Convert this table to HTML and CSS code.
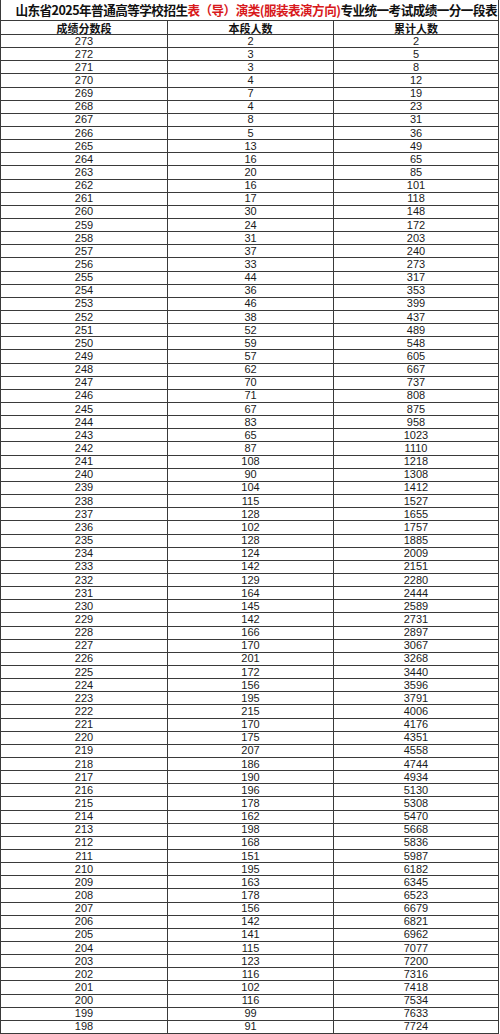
FILE: index.html
```html
<!DOCTYPE html>
<html lang="zh">
<head>
<meta charset="utf-8">
<link rel="stylesheet" href="styles.css">
</head>
<body>
<div class="sheet">
<div class="title">山东省2025年普通高等学校招生<span class="red">表（导）演类(服装表演方向)</span>专业统一考试成绩一分一段表</div>
<div class="hd">成绩分数段</div><div class="hd">本段人数</div><div class="hd">累计人数</div>
<div>273</div><div>2</div><div>2</div>
<div>272</div><div>3</div><div>5</div>
<div>271</div><div>3</div><div>8</div>
<div>270</div><div>4</div><div>12</div>
<div>269</div><div>7</div><div>19</div>
<div>268</div><div>4</div><div>23</div>
<div>267</div><div>8</div><div>31</div>
<div>266</div><div>5</div><div>36</div>
<div>265</div><div>13</div><div>49</div>
<div>264</div><div>16</div><div>65</div>
<div>263</div><div>20</div><div>85</div>
<div>262</div><div>16</div><div>101</div>
<div>261</div><div>17</div><div>118</div>
<div>260</div><div>30</div><div>148</div>
<div>259</div><div>24</div><div>172</div>
<div>258</div><div>31</div><div>203</div>
<div>257</div><div>37</div><div>240</div>
<div>256</div><div>33</div><div>273</div>
<div>255</div><div>44</div><div>317</div>
<div>254</div><div>36</div><div>353</div>
<div>253</div><div>46</div><div>399</div>
<div>252</div><div>38</div><div>437</div>
<div>251</div><div>52</div><div>489</div>
<div>250</div><div>59</div><div>548</div>
<div>249</div><div>57</div><div>605</div>
<div>248</div><div>62</div><div>667</div>
<div>247</div><div>70</div><div>737</div>
<div>246</div><div>71</div><div>808</div>
<div>245</div><div>67</div><div>875</div>
<div>244</div><div>83</div><div>958</div>
<div>243</div><div>65</div><div>1023</div>
<div>242</div><div>87</div><div>1110</div>
<div>241</div><div>108</div><div>1218</div>
<div>240</div><div>90</div><div>1308</div>
<div>239</div><div>104</div><div>1412</div>
<div>238</div><div>115</div><div>1527</div>
<div>237</div><div>128</div><div>1655</div>
<div>236</div><div>102</div><div>1757</div>
<div>235</div><div>128</div><div>1885</div>
<div>234</div><div>124</div><div>2009</div>
<div>233</div><div>142</div><div>2151</div>
<div>232</div><div>129</div><div>2280</div>
<div>231</div><div>164</div><div>2444</div>
<div>230</div><div>145</div><div>2589</div>
<div>229</div><div>142</div><div>2731</div>
<div>228</div><div>166</div><div>2897</div>
<div>227</div><div>170</div><div>3067</div>
<div>226</div><div>201</div><div>3268</div>
<div>225</div><div>172</div><div>3440</div>
<div>224</div><div>156</div><div>3596</div>
<div>223</div><div>195</div><div>3791</div>
<div>222</div><div>215</div><div>4006</div>
<div>221</div><div>170</div><div>4176</div>
<div>220</div><div>175</div><div>4351</div>
<div>219</div><div>207</div><div>4558</div>
<div>218</div><div>186</div><div>4744</div>
<div>217</div><div>190</div><div>4934</div>
<div>216</div><div>196</div><div>5130</div>
<div>215</div><div>178</div><div>5308</div>
<div>214</div><div>162</div><div>5470</div>
<div>213</div><div>198</div><div>5668</div>
<div>212</div><div>168</div><div>5836</div>
<div>211</div><div>151</div><div>5987</div>
<div>210</div><div>195</div><div>6182</div>
<div>209</div><div>163</div><div>6345</div>
<div>208</div><div>178</div><div>6523</div>
<div>207</div><div>156</div><div>6679</div>
<div>206</div><div>142</div><div>6821</div>
<div>205</div><div>141</div><div>6962</div>
<div>204</div><div>115</div><div>7077</div>
<div>203</div><div>123</div><div>7200</div>
<div>202</div><div>116</div><div>7316</div>
<div>201</div><div>102</div><div>7418</div>
<div>200</div><div>116</div><div>7534</div>
<div>199</div><div>99</div><div>7633</div>
<div>198</div><div>91</div><div>7724</div>
</div>
</body>
</html>
```
FILE: styles.css
```css
html, body {
  margin: 0;
  padding: 0;
  background: #fff;
}
.sheet {
  width: 497px;
  height: 1033px;
  display: grid;
  grid-template-columns: 166px 165px 164px;
  grid-template-rows: 20px 13px repeat(76, 1fr);
  gap: 1px;
  padding: 0 1px 1px 1px;
  background: #3a3a3a;
  font-family: "Liberation Sans", Arial, "Noto Sans CJK SC", sans-serif;
  font-size: 11px;
  color: #1a1a1a;
}
.sheet > div {
  background: #fff;
  display: flex;
  align-items: center;
  justify-content: center;
  line-height: 1;
  white-space: nowrap;
}
.sheet > .title {
  grid-column: 1 / -1;
  font-family: "Noto Sans CJK SC", sans-serif;
  font-weight: 700;
  font-size: 12.6px;
  letter-spacing: -0.55px;
  color: #111;
  justify-content: flex-end;
  padding-right: 1px;
}
.red {
  color: #d8191c;
}
.sheet > .hd {
  font-family: "Noto Sans CJK SC", sans-serif;
  font-weight: 700;
  font-size: 11px;
  line-height: 12px;
  color: #111;
}
```
